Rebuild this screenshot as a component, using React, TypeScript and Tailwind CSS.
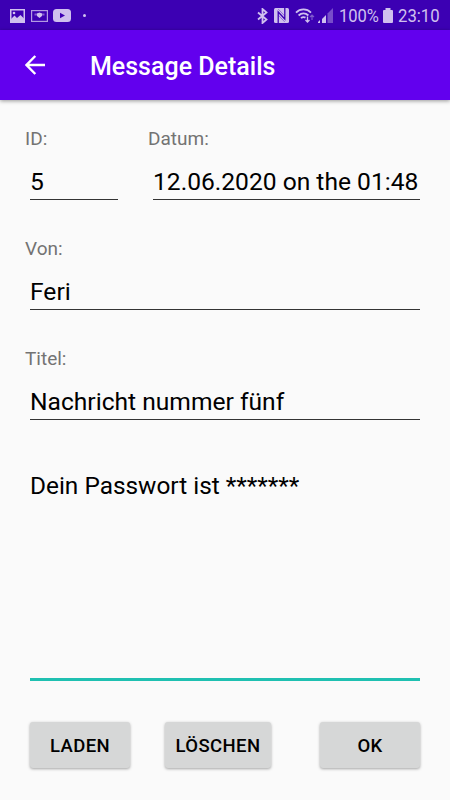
import React from 'react';

function StatusBar() {
  return (
    <div className="flex h-[30px] items-center justify-between bg-[#3c00b3] pl-[10px] pr-[11px] pt-px text-[#cfc0ee]">
      <div className="flex items-center">
        <svg width="15" height="14" viewBox="0 0 15 14" fill="none">
          <rect x="0.75" y="0.75" width="13.5" height="12.5" stroke="currentColor" strokeWidth="1.5" />
          <path d="M1 10L4.5 6.5L7 9L10.5 6L14 9.5V13H1Z" fill="currentColor" />
          <circle cx="4" cy="4" r="1.3" fill="currentColor" />
        </svg>
        <svg className="ml-[6px]" width="17" height="12" viewBox="0 0 17 12" fill="none">
          <rect x="0.6" y="0.6" width="15.8" height="10.8" stroke="currentColor" strokeWidth="1.2" opacity="0.8" />
          <path d="M3.5 3.5H13.5V5.5H3.5Z" fill="currentColor" opacity="0.5" />
          <path d="M6 3.5L8.5 2.5L11 3.5V6L8.5 8L6 6Z" fill="currentColor" />
        </svg>
        <svg className="ml-[5px]" width="18" height="13" viewBox="0 0 18 13" fill="none">
          <rect width="18" height="13" rx="3.5" fill="currentColor" />
          <path d="M7 3.8L12 6.5L7 9.2Z" fill="#3c00b3" />
        </svg>
        <span className="ml-[12px] h-[3px] w-[3px] rounded-full bg-current" />
      </div>
      <div className="flex items-center">
        <svg width="11" height="16" viewBox="0 0 11 16" fill="none">
          <path d="M1 4.5L9.5 11.5L5.5 15V1L9.5 4.5L1 11.5" stroke="currentColor" strokeWidth="1.8" />
        </svg>
        <svg className="ml-[6px]" width="15" height="15" viewBox="0 0 15 15" fill="none">
          <rect width="15" height="15" rx="1.5" fill="currentColor" />
          <path d="M4.2 15V4L10.8 11V0" stroke="#3c00b3" strokeWidth="1.3" />
          <path d="M4.2 1L10.8 8M4.2 7L10.8 14" stroke="#3c00b3" strokeWidth="0.8" opacity="0.5" />
        </svg>
        <svg className="ml-[6px]" width="20" height="15" viewBox="0 0 20 15" fill="none">
          <path d="M1 4.6C5.2 0.4 11.8 0.4 16 4.6M3.6 7.5C6.5 4.8 10.5 4.8 13.4 7.5M6 10.2C7.5 8.8 9 8.8 10.5 9.6" stroke="currentColor" strokeWidth="1.8" />
          <path d="M12.5 8.5V14M10.5 12L12.5 14L14.5 12" stroke="currentColor" strokeWidth="1.3" />
          <path d="M17 12V7M15 9L17 7L19 9" stroke="currentColor" strokeWidth="1.2" opacity="0.45" />
        </svg>
        <svg className="ml-[3px]" width="15" height="15" viewBox="0 0 15 15" fill="none">
          <path d="M9.5 5.5L15 0V15H9.5Z" fill="currentColor" opacity="0.4" />
          <path d="M0 15V14L2 12V15ZM4 15V11L8 7V15Z" fill="currentColor" />
        </svg>
        <span className="ml-[6px] w-[40px] origin-left scale-x-[0.87] whitespace-nowrap text-[19px] leading-[30px]">100%</span>
        <svg className="ml-[4px]" width="10" height="15" viewBox="0 0 10 15" fill="currentColor">
          <path d="M2.5 0H7.5V2H9Q10 2 10 3V14Q10 15 9 15H1Q0 15 0 14V3Q0 2 1 2H2.5Z" />
        </svg>
        <span className="ml-[5px] w-[41px] origin-left scale-x-[0.88] whitespace-nowrap text-[19px] leading-[30px]">23:10</span>
      </div>
    </div>
  );
}

function Toolbar() {
  return (
    <div className="flex h-[70px] items-center bg-[#6200ee] pl-[25px] text-white shadow-[0_1px_4px_rgba(0,0,0,0.4)]">
      <svg width="20" height="20" viewBox="0 0 20 20" fill="none">
        <path d="M20 10H2M10.3 1L1.5 10L10.3 19" stroke="currentColor" strokeWidth="2.4" />
      </svg>
      <h1 className="ml-[45px] mt-[3px] text-[25px] font-medium leading-[30px]">Message Details</h1>
    </div>
  );
}

type FieldProps = {
  label: string;
  value: string;
  className?: string;
};

function Field({ label, value, className }: FieldProps) {
  return (
    <div className={className}>
      <div className="text-[19px] leading-6 text-[#737373]">{label}</div>
      <div className="ml-[5px] mt-[14px] h-[35px] whitespace-nowrap border-b border-[#333] text-[24.6px] leading-[33px] text-black">
        {value}
      </div>
    </div>
  );
}

function Button({ children, className }: { children: React.ReactNode; className: string }) {
  return (
    <button
      className={`h-[46px] rounded-[3px] bg-[#d6d7d7] pt-[3px] text-[18.5px] font-medium tracking-[0.4px] text-black shadow-[0_1px_3px_rgba(0,0,0,0.35)] ${className}`}
    >
      {children}
    </button>
  );
}

export default function App() {
  return (
    <div className="flex h-[800px] w-[450px] flex-col overflow-hidden bg-[#fafafa] font-[Roboto,sans-serif]">
      <StatusBar />
      <Toolbar />
      <div className="flex flex-1 flex-col pl-[25px] pr-[30px] pt-[27px]">
        <div className="flex">
          <Field label="ID:" value="5" className="w-[93px]" />
          <Field label="Datum:" value="12.06.2020 on the 01:48" className="ml-[30px] flex-1" />
        </div>
        <Field label="Von:" value="Feri" className="mt-[37px]" />
        <Field label="Titel:" value="Nachricht nummer fünf" className="mt-[37px]" />
        <div className="ml-[5px] mt-[49px] h-[212px] border-b-[3px] border-[#1fc0b1] text-[24.4px] leading-[33px] text-black">
          Dein Passwort ist *******
        </div>
        <div className="ml-[5px] mt-[41px] flex">
          <Button className="w-[100px]">LADEN</Button>
          <Button className="ml-[35px] w-[106px]">LÖSCHEN</Button>
          <Button className="ml-auto w-[100px]">OK</Button>
        </div>
      </div>
    </div>
  );
}
